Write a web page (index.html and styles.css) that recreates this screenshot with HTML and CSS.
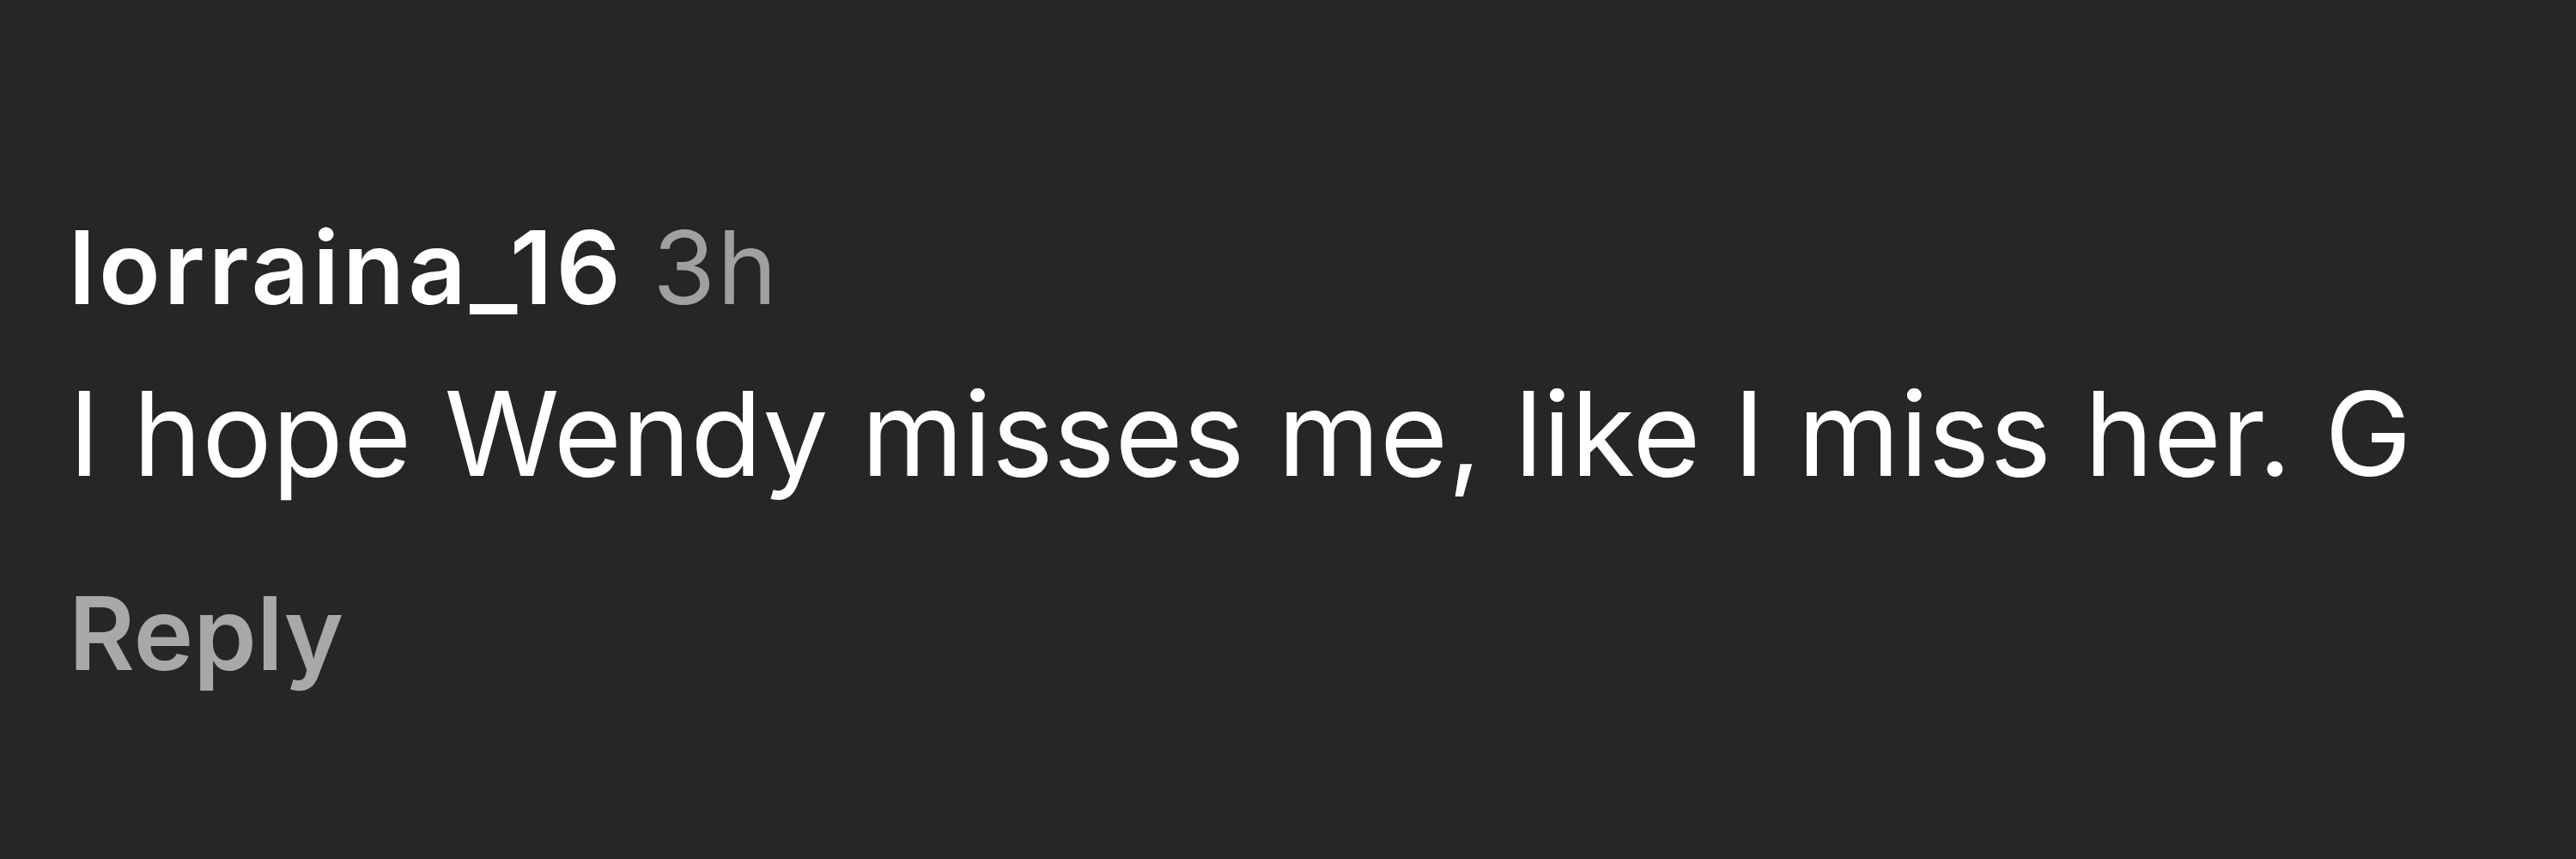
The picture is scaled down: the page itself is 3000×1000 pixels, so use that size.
FILE: index.html
```html
<!DOCTYPE html>
<html lang="en">
<head>
    <meta charset="UTF-8">
    <meta name="viewport" content="width=device-width, initial-scale=1.0">
    <title>Comment</title>
    <link rel="stylesheet" href="styles.css">
</head>
<body>
    <div class="comment">
        <p class="comment-head">
            <span class="username">lorraina_16</span>
            <span class="time">3h</span>
        </p>
        <p class="comment-text">I hope Wendy misses me, like I miss her. G</p>
        <p class="reply">Reply</p>
    </div>
</body>
</html>
```

FILE: styles.css
```css
html, body {
    margin: 0;
    background-color: #262626;
}
body {
    font-family: Inter, "Noto Sans", sans-serif;
    color: #ffffff;
    width: 3000px;
    height: 1000px;
    overflow: hidden;
}
.comment {
    padding: 241px 0 0 80px;
}
.comment p {
    margin: 0;
    white-space: nowrap;
}
.comment-head {
    font-size: 118px;
    line-height: 140px;
}
.username {
    font-weight: 600;
    letter-spacing: 4px;
}
.time {
    color: #a0a0a0;
    font-weight: 400;
    letter-spacing: 2px;
}
.comment-text {
    font-size: 136px;
    line-height: 160px;
    margin-top: 44px !important;
}
.reply {
    color: #a8a8a8;
    font-size: 118px;
    font-weight: 600;
    line-height: 140px;
    margin-top: 82px !important;
}
```
